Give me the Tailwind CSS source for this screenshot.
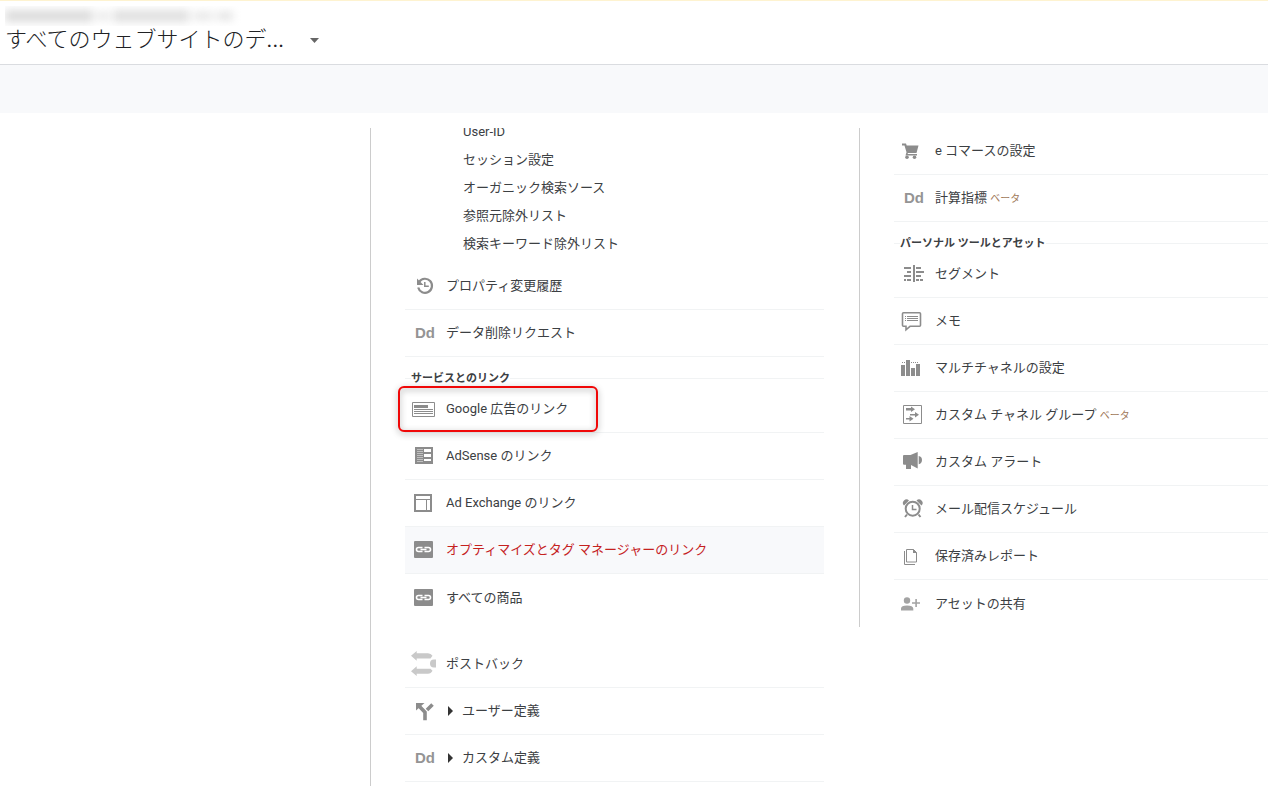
<!DOCTYPE html>
<html lang="ja">
<head>
<meta charset="utf-8">
<title>アナリティクス管理</title>
<script src="https://cdn.jsdelivr.net/npm/@tailwindcss/browser@4"></script>
</head>
<body class="bg-white font-[Roboto,'Noto_Sans_CJK_JP',sans-serif] text-[13px] leading-5 text-[#3c4043]">
<div class="flex h-screen flex-col overflow-hidden">
<header class="h-[65px] shrink-0 border-t border-b border-t-[#fef3d0] border-b-[#dadce0] pt-[5px] pl-[5px]">
  <div class="h-5 w-[238px] overflow-hidden" aria-hidden="true">
    <div class="mt-1 flex h-3 items-center gap-1 blur-xs">
      <span class="h-3 w-[88px] bg-[#dcdcdc]"></span><span class="h-2 w-3 bg-[#e6e6e6]"></span><span class="h-3 w-[76px] bg-[#e0e0e0]"></span><span class="h-2 w-5 bg-[#e6e6e6]"></span><span class="h-2 w-4 bg-[#e2e2e2]"></span>
    </div>
  </div>
  <button class="flex h-7 items-center text-[22px] leading-7 font-light text-[#202124]">
    <span>すべてのウェブサイトのデ<span class="font-normal">...</span></span>
    <svg class="ml-[26px] h-[5px] w-[9px]" viewBox="0 0 9 5" fill="#666"><path d="M0 0h9L4.500 5z"/></svg>
  </button>
</header>
<div class="h-12 shrink-0 bg-[#f8f9fb]"></div>
<main class="mt-[15px] grid min-h-0 flex-1 grid-cols-[370fr_489fr_409fr] items-start overflow-hidden">
  <div></div>
  <section class="h-full overflow-hidden border-l border-[#ccc] pr-[35px] pl-[34px]">
    <ul class="-mt-[10px] mb-[5px] pl-[58px] leading-7">
      <li><a href="#">User-ID</a></li>
      <li><a href="#">セッション設定</a></li>
      <li><a href="#">オーガニック検索ソース</a></li>
      <li><a href="#">参照元除外リスト</a></li>
      <li><a href="#">検索キーワード除外リスト</a></li>
    </ul>
    <a href="#" class="flex h-[47px] items-center border-b border-[#f1f3f4]">
      <svg class="h-[46px] w-[41px]" viewBox="0 0 41 46" fill="none" stroke="#8c8c8c" stroke-width="2.200"><path d="M14.200 18.800A7 7 0 1 1 13.200 24.500"/><path d="M12 15.500v6.500h6.500z" fill="#8c8c8c" stroke="none"/><path d="M19.800 19v4.200h4" stroke-width="1.500"/></svg>
      <span>プロパティ変更履歴</span></a>
    <a href="#" class="flex h-[47px] items-center border-b border-[#f1f3f4]">
      <span class="w-[41px] pl-[10px] font-['Liberation_Sans',sans-serif] text-[15px] font-bold text-[#949494]">Dd</span>
      <span>データ削除リクエスト</span></a>
    <h2 class="relative h-[29px] pt-[12px] pl-[6px] text-[11px] font-bold before:absolute before:inset-x-0 before:top-[21px] before:h-px before:bg-[#f1f3f4]"><span class="relative bg-white">サービスとのリンク</span></h2>
    <a href="#" class="relative flex h-[47px] items-center border-b border-[#f1f3f4]">
      <svg class="h-[46px] w-[41px]" viewBox="0 0 41 46"><path d="M7.500 16.500h22v14h-22z" fill="none" stroke="#8c8c8c"/><path d="M9 19h14v3H9zM9 23h19v1H9zM9 25h19v1H9zM9 27h19v1H9z" fill="#8c8c8c"/></svg>
      <span>Google 広告のリンク</span>
      <span class="pointer-events-none absolute top-0 -left-[7px] h-[46px] w-[200px] rounded-md border-2 border-[#f00808] drop-shadow-[0_2px_3px_rgba(0,0,0,0.4)]"></span></a>
    <a href="#" class="flex h-[47px] items-center border-b border-[#f1f3f4]">
      <svg class="h-[46px] w-[41px]" viewBox="0 0 41 46"><path d="M10 14h18v17H10z" fill="#8c8c8c"/><path d="M12 16h6v1h-6zM12 18h6v1h-6zM12 20h6v1h-6zM12 22h6v1h-6zM12 24h6v1h-6zM12 26h6v1h-6zM12 28h6v1h-6z" fill="#c0c0c0"/><path d="M19 16h7v3h-7zM19 21h7v3h-7zM19 26h7v2h-7z" fill="#fff"/></svg>
      <span>AdSense のリンク</span></a>
    <a href="#" class="flex h-[47px] items-center border-b border-[#f1f3f4]">
      <svg class="h-[46px] w-[41px]" viewBox="0 0 41 46" fill="none" stroke="#8c8c8c"><path d="M10 15h16v16H10z" stroke-width="2"/><path d="M11 19.500h14M21.500 19.500v11"/></svg>
      <span>Ad Exchange のリンク</span></a>
    <a href="#" class="flex h-[47px] items-center border-b border-[#f1f3f4] bg-[#f8f9fb] text-[#c5221f]">
      <svg class="h-[46px] w-[41px]" viewBox="0 0 41 46"><rect x="9" y="14" width="19" height="17" rx="1" fill="#8c8c8c"/><path d="M17.500 20.500h-4a2 2 0 0 0 0 4h4M19.500 20.500h4a2 2 0 0 1 0 4h-4M15.500 22.500h6" fill="none" stroke="#fff" stroke-width="1.600"/></svg>
      <span>オプティマイズとタグ マネージャーのリンク</span></a>
    <a href="#" class="mb-5 flex h-[47px] items-center">
      <svg class="h-[46px] w-[41px]" viewBox="0 0 41 46"><rect x="9" y="14" width="19" height="17" rx="1" fill="#8c8c8c"/><path d="M17.500 20.500h-4a2 2 0 0 0 0 4h4M19.500 20.500h4a2 2 0 0 1 0 4h-4M15.500 22.500h6" fill="none" stroke="#fff" stroke-width="1.600"/></svg>
      <span>すべての商品</span></a>
    <a href="#" class="flex h-[47px] items-center border-b border-[#f1f3f4]">
      <svg class="h-[46px] w-[41px]" viewBox="0 0 41 46" fill="#c9c9c9"><path d="M6 14.700L11.700 10v2.300H23q3 0 4.500 2.500L25.500 17.500H11.700v2.300zM6 30.300L11.700 25.300v2.400H25.500l2 2q-1.500 3-4.500 3H11.700v2.400z"/><path d="M31 18.500h-2a4 4 0 0 0 0 8h2z"/></svg>
      <span>ポストバック</span></a>
    <button class="flex h-[47px] w-full items-center border-b border-[#f1f3f4]">
      <svg class="h-[46px] w-[41px]" viewBox="0 0 41 46" fill="none" stroke="#8c8c8c" stroke-width="3.600"><path d="M20 32.300v-8L14 18M22 22l5.500-5.500"/><path d="M11 15h8.500L11 22.500z" fill="#8c8c8c" stroke="none"/></svg>
      <svg class="mr-[9px] ml-[2px] h-[10px] w-[5px]" viewBox="0 0 5 10" fill="#333"><path d="M0 0l5 5-5 5z"/></svg>
      <span>ユーザー定義</span></button>
    <button class="flex h-[47px] w-full items-center border-b border-[#f1f3f4]">
      <span class="w-[41px] pl-[10px] text-left font-['Liberation_Sans',sans-serif] text-[15px] font-bold text-[#949494]">Dd</span>
      <svg class="mr-[9px] ml-[2px] h-[10px] w-[5px]" viewBox="0 0 5 10" fill="#333"><path d="M0 0l5 5-5 5z"/></svg>
      <span>カスタム定義</span></button>
  </section>
  <section class="border-l border-[#ccc] pl-[34px]">
    <a href="#" class="flex h-[47px] items-center border-b border-[#f1f3f4]">
      <svg class="h-[46px] w-[41px]" viewBox="0 0 41 46" fill="#8c8c8c"><path d="M8 15.500h4l.7 2H24.500L22.500 25h-8.500l-.5 1H23v1.500H11.500l1-3.300L10.500 17.500H8z"/><circle cx="13" cy="29.300" r="1.800"/><circle cx="20.500" cy="29.300" r="1.800"/></svg>
      <span>e コマースの設定</span></a>
    <a href="#" class="flex h-[47px] items-center border-b border-[#f1f3f4]">
      <span class="w-[41px] pl-[10px] font-['Liberation_Sans',sans-serif] text-[15px] font-bold text-[#949494]">Dd</span>
      <span>計算指標 <small class="text-[10px] text-[#a07858]">ベータ</small></span></a>
    <h2 class="relative h-[29px] pt-[12px] pl-[6px] text-[11px] font-bold before:absolute before:inset-x-0 before:top-[21px] before:h-px before:bg-[#f1f3f4]"><span class="relative bg-white">パーソナル ツールとアセット</span></h2>
    <a href="#" class="flex h-[47px] items-center border-b border-[#f1f3f4]">
      <svg class="h-[46px] w-[41px]" viewBox="0 0 41 46" fill="none" stroke="#8c8c8c" stroke-width="2"><path d="M20 14v17M10 17h7M13 21h4M10 25h7M13 29h4M10 29h2M22 17h5M22 21h8M22 25h5M22 29h3M26 29h3"/></svg>
      <span>セグメント</span></a>
    <a href="#" class="flex h-[47px] items-center border-b border-[#f1f3f4]">
      <svg class="h-[46px] w-[41px]" viewBox="0 0 41 46" fill="none" stroke="#8c8c8c"><path d="M9.500 14.700h16q1 0 1 1v11.600q0 1-1 1H16l-4 3.500v-3.500H9.500q-1 0-1-1V15.700q0-1 1-1z" stroke-width="1.600"/><path d="M11 18.500h1M11 20.500h1M11 22.500h1M13 18.500h11M13 20.500h11M13 22.500h11"/></svg>
      <span>メモ</span></a>
    <a href="#" class="flex h-[47px] items-center border-b border-[#f1f3f4]">
      <svg class="h-[46px] w-[41px]" viewBox="0 0 41 46" fill="#8c8c8c"><path d="M7 20h4v11H7zM12 15h4v16h-4zM17 23h4v8h-4zM22 19h4v12h-4zM8 17h1v1H8zM10 17h1v1h-1zM17 17h1v1h-1zM19 17h1v1h-1zM21 17h1v1h-1zM23 17h1v1h-1z"/></svg>
      <span>マルチチャネルの設定</span></a>
    <a href="#" class="flex h-[47px] items-center border-b border-[#f1f3f4]">
      <svg class="h-[46px] w-[41px]" viewBox="0 0 41 46"><path d="M9.500 13.500h18v18h-18z" fill="none" stroke="#8c8c8c"/><path d="M12 16h5v-1.500l4 2.700-4 2.700V18.500h-5zM16 22h5v-2l4 2.700-4 2.800V23.500h-5zM12 26h3.500v-2l4 2.700-4 2.800V27.500H12z" fill="#8c8c8c"/></svg>
      <span>カスタム チャネル グループ <small class="text-[10px] text-[#a07858]">ベータ</small></span></a>
    <a href="#" class="flex h-[47px] items-center border-b border-[#f1f3f4]">
      <svg class="h-[46px] w-[41px]" viewBox="0 0 41 46" fill="#8c8c8c"><path d="M10 16h6.500L23.700 13v16.500L17 26v4h-5v-4.300H10q-1 0-1-1V17q0-1 1-1zM24.700 17q3.300.5 3.300 4t-3.300 4.300z"/></svg>
      <span>カスタム アラート</span></a>
    <a href="#" class="flex h-[47px] items-center border-b border-[#f1f3f4]">
      <svg class="h-[46px] w-[41px]" viewBox="0 0 41 46" fill="none" stroke="#8c8c8c" stroke-width="2"><circle cx="18.700" cy="22.700" r="7"/><path d="M18.500 19v4.500h4" stroke-width="1.500"/><path d="M10 19.500a3.200 3.200 0 0 1 5-5zM27.500 19.500a3.200 3.200 0 0 0-5-5z" fill="#8c8c8c" stroke="none"/><path d="M13 28.500l-2 2.500M24.500 28.500l2 2.500"/></svg>
      <span>メール配信スケジュール</span></a>
    <a href="#" class="flex h-[47px] items-center border-b border-[#f1f3f4]">
      <svg class="h-[46px] w-[41px]" viewBox="0 0 41 46" fill="none" stroke="#8c8c8c"><path d="M12.500 16.500h7l3 3v9.500h-10zM10.500 18v13.500H21"/><path d="M19 16v4h4z" fill="#8c8c8c" stroke="none"/></svg>
      <span>保存済みレポート</span></a>
    <a href="#" class="flex h-[47px] items-center">
      <svg class="h-[46px] w-[41px]" viewBox="0 0 41 46" fill="#a3a3a3"><circle cx="13" cy="19.500" r="3.200"/><path d="M7 29.500v-2q0-3 6-3t6.300 3v2zM21.300 18h1.600v3.200H26v1.600h-3.100V26h-1.600v-3.200H18v-1.600h3.300z"/></svg>
      <span>アセットの共有</span></a>
  </section>
</main>
</div>
</body>
</html>
